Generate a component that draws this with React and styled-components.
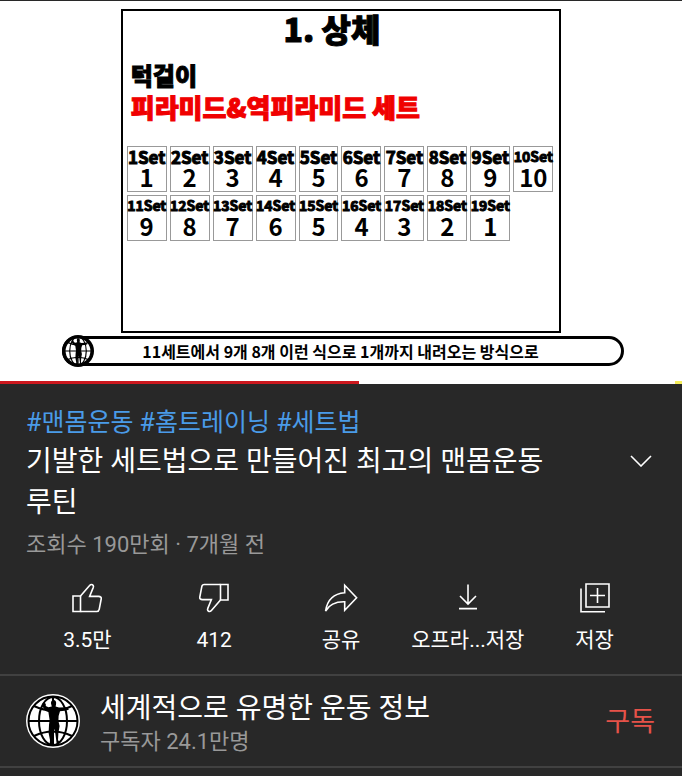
import React from 'react';
import styled, { createGlobalStyle } from 'styled-components';

const tags = ['#맨몸운동', '#홈트레이닝', '#세트법'];

const reps = [1, 2, 3, 4, 5, 6, 7, 8, 9, 10, 9, 8, 7, 6, 5, 4, 3, 2, 1];

const ThumbIcon = ({ down }) => (
  <Svg width="30" height="30" viewBox="0 0 30 30">
    <g transform={down ? 'rotate(180 15 15)' : undefined}>
      <path d="M1 13H8.5V28.5H1Z" />
      <path d="M8.5 13L17.6 2.6C19.4 .4 22.2 1.8 21.2 4.6L17.6 13.4H26.6C28.6 13.4 29.5 14.4 29.2 16L27.2 26.4C26.9 27.8 26.2 28.5 24.8 28.5H8.5" />
    </g>
  </Svg>
)

const ShareIcon = () => (
  <Svg width="34" height="30" viewBox="0 0 34 30">
    <path d="M20.7 2.2L32.6 14.7L20.7 27.2V18.8C12.5 18.6 5.5 21 1.6 28C3.2 17.5 9.5 10.6 20.7 9.8Z" />
  </Svg>
)

const DownloadIcon = () => (
  <Svg width="30" height="30" viewBox="0 0 30 30">
    <path d="M15 1.5V21M7 13L15 21L23 13M6 25.6H24" />
  </Svg>
)

const SaveIcon = () => (
  <Svg width="30" height="30" viewBox="0 0 30 30">
    <path d="M6 1H29V24H6ZM1 5.5V28.7H25M17.5 5V20M10 12.5H25" />
  </Svg>
)

const GlobeLogo = ({ size, ring }) => (
  <svg width={size} height={size} viewBox="0 0 54 54" aria-hidden="true">
    <circle cx="27" cy="27" r="27" fill={ring ? '#000' : '#fff'} />
    <circle cx="27" cy="27" r={ring ? 22 : 24.5} fill="#fff" stroke="#000" strokeWidth="2" />
    <g fill="none" stroke="#000" strokeWidth="2">
      <path d="M3 27H51M27 3V51M8 12Q27 21 46 12M8 42Q27 33 46 42" />
      <ellipse cx="27" cy="27" rx="14" ry="24" />
    </g>
    <path d="M27.5 6C29.6 6 30.6 8 30 10.4L29.6 12.4L33 13.4L40.6 13.2L43 15.4L40.4 16.6L34 17.2L32.6 22L32.4 27L33.6 32L32.4 39L32 46L34 49L30.6 49L29.4 40L28.4 35L26.6 41L26.8 49L28 51.6L23.6 51.4L24 46L22.6 39L23 31L23.6 26L22.4 18L19.6 17L15.8 11.6L17.4 8.6L19.8 9.8L19.8 12L22.4 13.2L25.8 12.4L25 9.4C24.8 7.4 26 6 27.5 6Z" fill="#000" />
  </svg>
)

const actions = [
  { icon: <ThumbIcon />, label: '3.5만' },
  { icon: <ThumbIcon down />, label: '412' },
  { icon: <ShareIcon />, label: '공유' },
  { icon: <DownloadIcon />, label: '오프라...저장' },
  { icon: <SaveIcon />, label: '저장' },
];

const Player = () => (
  <Screen>
    <Board>
      <BoardTitle>1. 상체</BoardTitle>
      <Exercise>턱걸이</Exercise>
      <Exercise $red>피라미드&amp;역피라미드 세트</Exercise>
      <Sets>
        {reps.map((count, i) => (
          <SetCell key={i}>
            <SetName $small={i > 8}>{i + 1}Set</SetName>
            <SetCount>{count}</SetCount>
          </SetCell>
        ))}
      </Sets>
    </Board>
    <Caption>
      <GlobeLogo size={32} ring />
      <CaptionText>11세트에서 9개 8개 이런 식으로 1개까지 내려오는 방식으로</CaptionText>
    </Caption>
    <Played value="359" max="682" aria-label="재생 위치" />
    <AdMark />
  </Screen>
)

const App = () => (
  <>
    <GlobalStyle />
    <Player />
    <Details>
      <Tags>
        {tags.map((tag) => (
          <React.Fragment key={tag}>
            <a href="#tag">{tag}</a>
            {' '}
          </React.Fragment>
        ))}
      </Tags>
      <TitleRow>
        <Title>기발한 세트법으로 만들어진 최고의 맨몸운동 루틴</Title>
        <Expand aria-label="더보기">
          <Svg width="22" height="12" viewBox="0 0 22 12">
            <path d="M1 1L11 11L21 1" />
          </Svg>
        </Expand>
      </TitleRow>
      <Meta>조회수 190만회 · 7개월 전</Meta>
    </Details>
    <Actions>
      {actions.map(({ icon, label }, i) => (
        <Action key={i}>
          {icon}
          {label}
        </Action>
      ))}
    </Actions>
    <Channel>
      <GlobeLogo size={54} />
      <ChannelInfo>
        <ChannelName>세계적으로 유명한 운동 정보</ChannelName>
        <Subscribers>구독자 24.1만명</Subscribers>
      </ChannelInfo>
      <Subscribe>구독</Subscribe>
    </Channel>
  </>
)

const GlobalStyle = createGlobalStyle`
  * {
    box-sizing: border-box;
  }
  body {
    margin: 0;
    background: #282828;
    color: #fff;
    font-family: Roboto, 'Noto Sans CJK KR', sans-serif;
  }
  h1, h2, p, ol {
    margin: 0;
    padding: 0;
  }
  a {
    color: inherit;
    text-decoration: none;
  }
  button {
    padding: 0;
    border: 0;
    background: none;
    color: inherit;
    font-family: inherit;
    cursor: pointer;
  }
`;

const Svg = styled.svg`
  fill: none;
  stroke: #fff;
  stroke-width: 1.6;
`;

const Screen = styled.section`
  position: relative;
  display: flex;
  flex-direction: column;
  align-items: center;
  gap: 3px;
  aspect-ratio: 16 / 9;
  padding: 8px 0 18px;
  border-top: 1px solid #282828;
  background: #fff;
  color: #000;
  font-family: 'Noto Sans CJK KR', sans-serif;
`;

const Board = styled.div`
  flex: 1;
  width: 64.6%;
  padding: 0 6px 0 4px;
  border: 2px solid #000;
`;

const BoardTitle = styled.h2`
  padding-right: 16px;
  margin-bottom: 14px;
  font-size: 32px;
  font-weight: 900;
  line-height: 34px;
  text-align: center;
  -webkit-text-stroke: 1px #000;
`;

const Exercise = styled.p`
  padding-left: 4px;
  color: ${({ $red }) => ($red ? '#f00000' : '#000')};
  font-size: ${({ $red }) => ($red ? 26 : 24)}px;
  font-weight: 900;
  line-height: 32px;
  white-space: nowrap;
  -webkit-text-stroke: 1px;
`;

const Sets = styled.ol`
  display: grid;
  grid-template-columns: repeat(10, minmax(0, 1fr));
  gap: 3px;
  margin-top: 23px;
  list-style: none;
`;

const SetCell = styled.li`
  display: flex;
  flex-direction: column;
  align-items: center;
  height: 46px;
  border: 1px solid #999;
  font-weight: 700;
  white-space: nowrap;
`;

const SetName = styled.span`
  font-size: ${({ $small }) => ($small ? 14 : 17)}px;
  line-height: 19px;
  -webkit-text-stroke: 1px;
`;

const SetCount = styled.span`
  font-size: 24px;
  line-height: 22px;
`;

const Caption = styled.div`
  display: flex;
  align-items: center;
  width: 82.5%;
  height: 30px;
  margin-left: 4px;
  border: 3px solid #000;
  border-radius: 15px;

  svg {
    flex: none;
    margin-left: -3px;
  }
`;

const CaptionText = styled.p`
  flex: 1;
  padding-right: 34px;
  font-size: 16px;
  font-weight: 700;
  line-height: 24px;
  text-align: center;
  white-space: nowrap;
`;

const Played = styled.progress`
  position: absolute;
  bottom: 0;
  left: 0;
  width: 100%;
  height: 3px;
  border: 0;
  appearance: none;

  &::-webkit-progress-bar {
    background: transparent;
  }
  &::-webkit-progress-value {
    background: #cc181e;
  }
`;

const AdMark = styled.span`
  position: absolute;
  right: 0;
  bottom: 0;
  width: 7px;
  height: 3px;
  background: #f5ee5a;
`;

const Details = styled.section`
  padding: 21px 26px 0;
`;

const Tags = styled.p`
  color: #4a9be8;
  font-size: 25px;
  line-height: 36px;
`;

const TitleRow = styled.div`
  display: flex;
  align-items: flex-start;
  justify-content: space-between;
  gap: 80px;
`;

const Title = styled.h1`
  font-size: 28px;
  font-weight: 400;
  line-height: 41px;
`;

const Expand = styled.button`
  display: flex;
  flex: none;
  align-items: center;
  height: 40px;
  margin-right: 4px;
`;

const Meta = styled.p`
  margin-top: 7px;
  color: #999;
  font-size: 22px;
  line-height: 30px;
`;

const Actions = styled.div`
  display: grid;
  grid-template-columns: repeat(5, 1fr);
  padding: 23px 24px 20px;
  border-bottom: 2px solid #414141;
`;

const Action = styled.button`
  display: flex;
  flex-direction: column;
  align-items: center;
  gap: 13px;
  font-size: 21px;
  line-height: 28px;
  white-space: nowrap;
`;

const Channel = styled.section`
  display: flex;
  align-items: center;
  gap: 20px;
  padding: 11px 27px 11px 26px;
  border-bottom: 2px solid #414141;
`;

const ChannelInfo = styled.div`
  flex: 1;
  padding-top: 2px;
`;

const ChannelName = styled.h2`
  font-size: 28px;
  font-weight: 400;
  line-height: 40px;
`;

const Subscribers = styled.p`
  color: #999;
  font-size: 22px;
  line-height: 26px;
`;

const Subscribe = styled.button`
  padding-top: 3px;
  color: #e65249;
  font-size: 27px;
  line-height: 40px;
`;

export default App;
